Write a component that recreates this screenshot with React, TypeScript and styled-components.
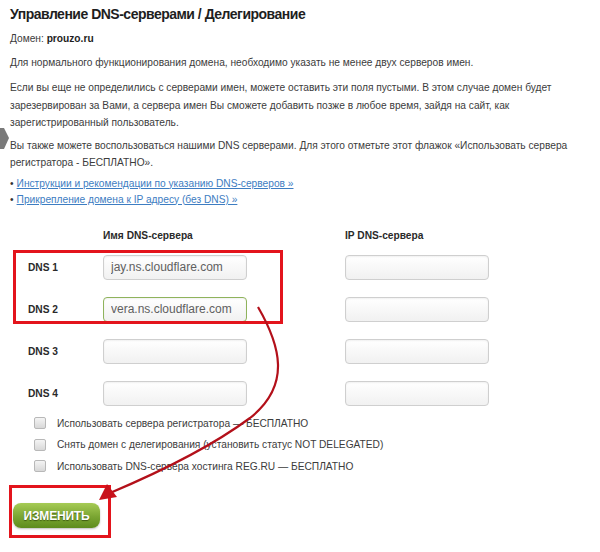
import React from 'react';
import styled, { createGlobalStyle } from 'styled-components';

const GlobalStyle = createGlobalStyle`
  body {
    margin: 0;
    background: #fff;
    font-family: 'Liberation Sans', Arial, sans-serif;
    font-size: 10.2px;
    color: #3c3c3c;
  }
`;

const Page = styled.div`
  position: relative;
  width: 600px;
  height: 552px;
  padding: 5px 10px 0;
  box-sizing: border-box;
  overflow: hidden;
`;

const Title = styled.h1`
  margin: 0;
  font-size: 14px;
  letter-spacing: -0.5px;
  line-height: 19px;
  font-weight: bold;
  color: #1e1e1e;
`;

const Para = styled.p<{ $top: number; $lh?: number }>`
  margin: ${({ $top }) => $top}px 0 0;
  line-height: ${({ $lh }) => $lh ?? 17}px;
`;

const Strong = styled.b`
  color: #1e1e1e;
`;

const Hint = styled.svg`
  position: absolute;
  left: 0;
  top: 128px;
`;

const Links = styled.ul`
  list-style: none;
  margin: 5px 0 0;
  padding: 0;
  line-height: 16px;
`;

const LinkItem = styled.li`
  &::before {
    content: '•';
    color: #333;
    margin-right: 3px;
  }
  a {
    color: #3d7dc2;
    text-decoration: underline;
  }
`;

const Table = styled.div`
  display: grid;
  grid-template-columns: 75px 242px 150px;
  align-items: center;
  row-gap: 17px;
  margin: 20px 0 0 18px;
`;

const HeadCell = styled.div`
  font-weight: bold;
  color: #2a2a2a;
  line-height: 16px;
  margin-bottom: -6px;
`;

const Label = styled.div`
  font-weight: bold;
  color: #2a2a2a;
`;

const Field = styled.input<{ $ok?: boolean }>`
  width: 144px;
  height: 25px;
  box-sizing: border-box;
  border: 1px solid ${({ $ok }) => ($ok ? '#8fb35c' : '#cfcfcf')};
  border-radius: 4px;
  background: linear-gradient(#ffffff, #f1f1f1);
  box-shadow: inset 0 1px 2px rgba(0, 0, 0, 0.06);
  padding: 0 7px;
  font-family: 'Liberation Sans', Arial, sans-serif;
  font-size: 12px;
  color: #606060;
  outline: none;
`;

const Checks = styled.div`
  margin: 7px 0 0 24px;
`;

const CheckRow = styled.label`
  display: flex;
  align-items: center;
  gap: 11px;
  line-height: 21.5px;
`;

const Box = styled.span`
  width: 10px;
  height: 10px;
  border: 1px solid #b8b8b8;
  border-radius: 2px;
  background: linear-gradient(#f4f4f4, #d8d8d8);
`;

const Button = styled.button`
  margin: 26px 0 0 3px;
  width: 87px;
  height: 25px;
  border: 0;
  border-radius: 8px;
  background: linear-gradient(#a6cb55, #7aa532 55%, #5e8c1d);
  box-shadow: 0 1px 2px rgba(0, 0, 0, 0.25);
  color: #fff;
  font-family: 'Liberation Sans', Arial, sans-serif;
  font-weight: bold;
  font-size: 12px;
  letter-spacing: -0.2px;
  text-shadow: 0 1px 1px #3d5a12;
  padding: 0;
`;

const Frame = styled.div<{ $x: number; $y: number; $w: number; $h: number }>`
  position: absolute;
  left: ${({ $x }) => $x}px;
  top: ${({ $y }) => $y}px;
  width: ${({ $w }) => $w}px;
  height: ${({ $h }) => $h}px;
  border: 3px solid #e3141c;
  box-sizing: border-box;
  pointer-events: none;
`;

const Overlay = styled.svg`
  position: absolute;
  left: 0;
  top: 0;
  pointer-events: none;
`;

const rows = [
  { label: 'DNS 1', name: 'jay.ns.cloudflare.com' },
  { label: 'DNS 2', name: 'vera.ns.cloudflare.com', ok: true },
  { label: 'DNS 3', name: '' },
  { label: 'DNS 4', name: '' },
];

const checks = [
  'Использовать сервера регистратора — БЕСПЛАТНО',
  'Снять домен с делегирования (установить статус NOT DELEGATED)',
  'Использовать DNS-сервера хостинга REG.RU — БЕСПЛАТНО',
];

export default function App() {
  return (
    <Page>
      <GlobalStyle />
      <Title>Управление DNS-серверами / Делегирование</Title>
      <Para $top={6}>
        Домен: <Strong>prouzo.ru</Strong>
      </Para>
      <Para $top={7}>
        Для нормального функционирования домена, необходимо указать не менее двух серверов имен.
      </Para>
      <Para $top={8} $lh={17.5}>
        Если вы еще не определились с серверами имен, можете оставить эти поля пустыми. В этом случае домен будет
        зарезервирован за Вами, а сервера имен Вы сможете добавить позже в любое время, зайдя на сайт, как
        зарегистрированный пользователь.
      </Para>
      <Para $top={5}>
        Вы также можете воспользоваться нашими DNS серверами. Для этого отметьте этот флажок «Использовать сервера
        регистратора - БЕСПЛАТНО».
      </Para>
      <Hint width="10" height="22" viewBox="0 0 10 22">
        <polygon points="0,0 4,0 9,10 4,21 0,21" fill="#7a7a7a" />
      </Hint>
      <Links>
        <LinkItem>
          <a href="#">Инструкции и рекомендации по указанию DNS-серверов »</a>
        </LinkItem>
        <LinkItem>
          <a href="#">Прикрепление домена к IP адресу (без DNS) »</a>
        </LinkItem>
      </Links>
      <Table>
        <span />
        <HeadCell>Имя DNS-сервера</HeadCell>
        <HeadCell>IP DNS-сервера</HeadCell>
        {rows.map((r) => (
          <React.Fragment key={r.label}>
            <Label>{r.label}</Label>
            <Field $ok={r.ok} defaultValue={r.name} />
            <Field />
          </React.Fragment>
        ))}
      </Table>
      <Checks>
        {checks.map((c) => (
          <CheckRow key={c}>
            <Box />
            {c}
          </CheckRow>
        ))}
      </Checks>
      <Button>ИЗМЕНИТЬ</Button>

      <Frame $x={13} $y={250} $w={270} $h={74} />
      <Frame $x={9} $y={485} $w={102} $h={53} />
      <Overlay width="600" height="552" viewBox="0 0 600 552">
        <path
          d="M258 307 C 280 345, 292 385, 250 418 Q 200 455, 110 493"
          fill="none"
          stroke="#b3101a"
          strokeWidth="2.2"
        />
        <polygon points="99,500 107,484 117,497" fill="#c8121c" />
      </Overlay>
    </Page>
  );
}
